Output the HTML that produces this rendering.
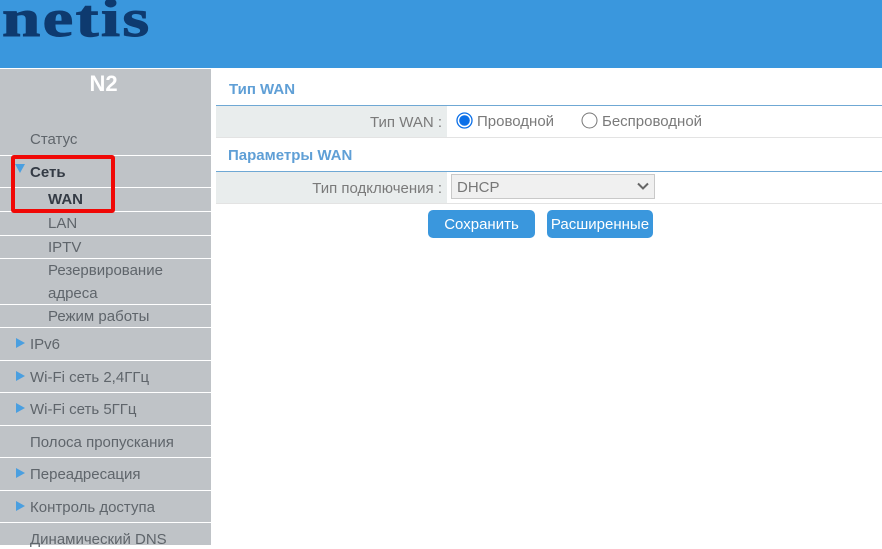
<!DOCTYPE html>
<html><head><meta charset="utf-8">
<style>
html,body{margin:0;padding:0;background:#fff}
body{width:882px;height:545px;position:relative;overflow:hidden;font-family:"Liberation Sans",sans-serif;color:#6b6b6b}
.a{position:absolute;white-space:nowrap}
#hd{left:0;top:0;width:882px;height:68px;background:#3a97dd}
#logo{left:2px;top:-11px;font:bold 53px/60px "Liberation Serif",serif;letter-spacing:1.8px;color:#0e3a6f;-webkit-text-stroke:1px #0e3a6f;transform:scaleX(1.3);transform-origin:0 0}
#sb{left:0;top:69px;width:211px;height:476px;background:#bfc3c7}
.ln{position:absolute;left:0;width:211px;height:1px;background:#fff}
.m{font-size:15px;line-height:18px;color:#5f656b}
.tri{position:absolute;left:16px;width:0;height:0;border-left:9px solid #4a9fe0;border-top:5px solid transparent;border-bottom:5px solid transparent}
.hl{background:#e9eded;left:216px;width:231px;height:31px}
.lbl{font-size:15px;line-height:18px;color:#7a7a7a}
.sec{font-size:15px;font-weight:bold;color:#5f9fd6;line-height:18px}
.h{position:absolute;left:216px;width:666px;height:1px}
.btn{background:#3a97dd;color:#fff;border-radius:5px;height:28px;font-size:15px;line-height:30px;text-align:center}
</style></head><body>
<div class="a" id="hd"></div>
<div class="a" id="logo">netis</div>
<div class="a" id="sb"></div>
<div class="a" style="left:0;top:71px;width:207px;text-align:center;font-size:22px;line-height:26px;font-weight:bold;color:#fff">N2</div>

<div class="ln" style="top:155px"></div>
<div class="ln" style="top:187px"></div>
<div class="ln" style="top:211px"></div>
<div class="ln" style="top:235px"></div>
<div class="ln" style="top:258px"></div>
<div class="ln" style="top:304px"></div>
<div class="ln" style="top:327px"></div>
<div class="ln" style="top:360px"></div>
<div class="ln" style="top:392px"></div>
<div class="ln" style="top:425px"></div>
<div class="ln" style="top:457px"></div>
<div class="ln" style="top:490px"></div>
<div class="ln" style="top:522px"></div>

<div class="a m" style="left:30px;top:131px">Статус</div>
<div class="a m" style="left:30px;top:164px;font-weight:bold;color:#343b45">Сеть</div>
<div class="a m" style="left:48px;top:191px;font-weight:bold;color:#343b45">WAN</div>
<div class="a m" style="left:48px;top:215px">LAN</div>
<div class="a m" style="left:48px;top:239px">IPTV</div>
<div class="a m" style="left:48px;top:262px">Резервирование</div>
<div class="a m" style="left:48px;top:285px">адреса</div>
<div class="a m" style="left:48px;top:308px">Режим работы</div>
<div class="a m" style="left:30px;top:336px">IPv6</div>
<div class="a m" style="left:30px;top:369px">Wi-Fi сеть 2,4ГГц</div>
<div class="a m" style="left:30px;top:401px">Wi-Fi сеть 5ГГц</div>
<div class="a m" style="left:30px;top:434px">Полоса пропускания</div>
<div class="a m" style="left:30px;top:466px">Переадресация</div>
<div class="a m" style="left:30px;top:499px">Контроль доступа</div>
<div class="a m" style="left:30px;top:531px">Динамический DNS</div>

<div class="a" style="left:15px;top:164px;width:0;height:0;border-top:9px solid #4a9fe0;border-left:5px solid transparent;border-right:5px solid transparent"></div>
<div class="tri" style="top:338px"></div>
<div class="tri" style="top:371px"></div>
<div class="tri" style="top:403px"></div>
<div class="tri" style="top:468px"></div>
<div class="tri" style="top:501px"></div>

<div class="a" style="left:11px;top:155px;width:96px;height:50px;border:4px solid #f00806;border-radius:3px"></div>

<div class="a sec" style="left:229px;top:81px">Тип WAN</div>
<div class="h" style="top:105px;background:#6fa8d4"></div>
<div class="a hl" style="top:106px"></div>
<div class="h" style="top:137px;background:#e3e3e3"></div>
<div class="a lbl" style="right:440px;top:114px">Тип WAN :</div>
<svg class="a" style="left:456px;top:112px" width="18" height="18"><circle cx="8.5" cy="8.5" r="7.5" fill="#fff" stroke="#0a6fe8" stroke-width="1.3"/><circle cx="8.5" cy="8.5" r="5.3" fill="#0a6fe8"/></svg>
<div class="a lbl" style="left:477px;top:113px">Проводной</div>
<svg class="a" style="left:581px;top:112px" width="18" height="18"><circle cx="8.5" cy="8.5" r="7.5" fill="#fff" stroke="#767676" stroke-width="1"/></svg>
<div class="a lbl" style="left:602px;top:113px">Беспроводной</div>

<div class="a sec" style="left:228px;top:147px">Параметры WAN</div>
<div class="h" style="top:171px;background:#6fa8d4"></div>
<div class="a hl" style="top:172px"></div>
<div class="h" style="top:203px;background:#e3e3e3"></div>
<div class="a lbl" style="right:440px;top:180px">Тип подключения :</div>
<div class="a" style="left:451px;top:174px;width:202px;height:23px;background:#f0f0f0;border:1px solid #c9c9c9"></div>
<div class="a" style="left:457px;top:179px;font-size:15px;line-height:18px;color:#777">DHCP</div>
<svg class="a" style="left:636px;top:181px" width="14" height="10"><path d="M2 2.5L7 7.5L12 2.5" fill="none" stroke="#666" stroke-width="2"/></svg>

<div class="a btn" style="left:428px;top:210px;width:107px">Сохранить</div>
<div class="a btn" style="left:547px;top:210px;width:106px">Расширенные</div>
</body></html>
